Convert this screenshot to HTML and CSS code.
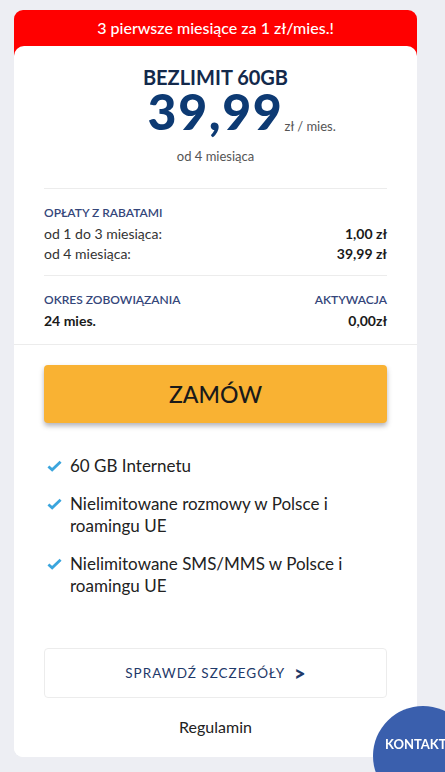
FILE: index.html
```html
<!DOCTYPE html>
<html lang="pl">
<head>
  <meta charset="UTF-8">
  <meta name="viewport" content="width=device-width, initial-scale=1.0">
  <title>Bezlimit 60GB</title>
  <link rel="stylesheet" href="styles.css">
</head>
<body>
  <div class="offer-card">
    <div class="promo">3 pierwsze miesiące za 1 zł/mies.!</div>

    <div class="card-body">
      <div class="inner">
        <h2 class="plan-name">BEZLIMIT 60GB</h2>
        <div class="price">
          <span class="amount">39,99<span class="per">zł / mies.</span></span>
        </div>
        <div class="price-note">od 4 miesiąca</div>

        <div class="fees">
          <div class="label">OPŁATY Z RABATAMI</div>
          <div class="row">
            <span>od 1 do 3 miesiąca:</span>
            <b>1,00 zł</b>
          </div>
          <div class="row">
            <span>od 4 miesiąca:</span>
            <b>39,99 zł</b>
          </div>
        </div>

        <div class="terms">
          <div class="row labels">
            <span class="label">OKRES ZOBOWIĄZANIA</span>
            <span class="label">AKTYWACJA</span>
          </div>
          <div class="row">
            <b>24 mies.</b>
            <b>0,00zł</b>
          </div>
        </div>
      </div>

      <div class="inner bottom">
        <button class="order-btn">ZAMÓW</button>

        <ul class="features">
          <li>
            <svg class="check" viewBox="0 0 16 12"><path d="M1.5 6.5 L5.5 10 L14.5 1.5" /></svg>
            <span>60 GB Internetu</span>
          </li>
          <li>
            <svg class="check" viewBox="0 0 16 12"><path d="M1.5 6.5 L5.5 10 L14.5 1.5" /></svg>
            <span>Nielimitowane rozmowy w Polsce i roamingu UE</span>
          </li>
          <li>
            <svg class="check" viewBox="0 0 16 12"><path d="M1.5 6.5 L5.5 10 L14.5 1.5" /></svg>
            <span>Nielimitowane SMS/MMS w Polsce i roamingu UE</span>
          </li>
        </ul>

        <a class="details-btn" href="#">SPRAWDŹ SZCZEGÓŁY <span class="arrow">&gt;</span></a>

        <a class="rules" href="#">Regulamin</a>
      </div>
    </div>
  </div>

  <a class="contact" href="#">KONTAKT</a>
</body>
</html>
```

FILE: styles.css
```css
body {
  font-family: Lato, 'Open Sans', sans-serif;
  margin: 0;
  padding: 10px 28px 14px 14px;
  background-color: #edeef3;
  overflow: hidden;
}

/* red only behind the header, so the bottom corners stay clean */
.offer-card {
  background: linear-gradient(#ff0000 0, #ff0000 50px, #fff 50px);
  border-radius: 9px;
  overflow: hidden;
}

.promo {
  height: 36px;
  line-height: 36px;
  text-align: center;
  color: #fff;
  font-size: 16px;
  font-weight: 500;
}

.card-body {
  background-color: #fff;
  border-radius: 10px 10px 0 0;
  padding-bottom: 20px;
}

.inner {
  padding: 0 30px;
}

.plan-name {
  margin: 0;
  padding-top: 19px;
  text-align: center;
  font-size: 20px;
  line-height: 24px;
  font-weight: 700;
  color: #13294b;
}

.price {
  display: flex;
  justify-content: center;
}

.amount {
  position: relative;
  font-size: 50px;
  line-height: 44px;
  font-weight: 900;
  color: #0d3a73;
  letter-spacing: 1.6px;
}

.per {
  position: absolute;
  left: calc(100% + 1px);
  top: 29px;
  white-space: nowrap;
  font-size: 13px;
  line-height: 16px;
  font-weight: 400;
  letter-spacing: 0;
  color: #555;
}

.price-note {
  margin-top: 15px;
  text-align: center;
  font-size: 13px;
  line-height: 16px;
  color: #555;
  padding-bottom: 24px;
  border-bottom: 1px solid #ececec;
}

.fees {
  padding: 16px 0 11px;
  border-bottom: 1px solid #ececec;
}

.label {
  font-size: 12px;
  font-weight: 600;
  color: #34467a;
  line-height: 16px;
}

.fees .label {
  margin-bottom: 3px;
}

.row {
  display: flex;
  justify-content: space-between;
  font-size: 14px;
  line-height: 20px;
  color: #333;
}

.row.labels {
  line-height: 16px;
  margin-bottom: 3px;
}

.row b {
  color: #1a1a1a;
}

.terms {
  padding: 16px 0 13px;
}

.bottom {
  border-top: 1px solid #ececec;
  padding-top: 20px;
}

.order-btn {
  display: block;
  width: 100%;
  height: 58px;
  border: none;
  border-radius: 4px;
  background-color: #f9b233;
  box-shadow: 0 3px 5px rgba(40, 40, 60, 0.35);
  font-family: inherit;
  font-size: 23px;
  font-weight: 500;
  color: #1a1a1a;
  cursor: pointer;
}

.features {
  list-style: none;
  margin: 32px 0 0;
  padding: 0 0 0 3px;
}

.features li {
  display: flex;
  align-items: flex-start;
  font-size: 17px;
  line-height: 22px;
  color: #222;
  margin-bottom: 16px;
}

.features li:last-child {
  margin-bottom: 0;
}

.check {
  flex: none;
  width: 15px;
  height: 12px;
  margin: 5px 8px 0 0;
  fill: none;
  stroke: #3ba5dd;
  stroke-width: 3;
}

.details-btn {
  display: flex;
  justify-content: center;
  align-items: center;
  box-sizing: border-box;
  height: 50px;
  margin-top: 51px;
  border: 1px solid #ececec;
  border-radius: 4px;
  font-size: 13.5px;
  letter-spacing: 1px;
  color: #1f3a6a;
  text-decoration: none;
}

.arrow {
  margin-left: 9px;
  font-size: 20px;
  font-weight: 900;
  letter-spacing: 0;
}

.rules {
  display: block;
  margin-top: 19px;
  text-align: center;
  font-size: 16px;
  line-height: 20px;
  color: #222;
  text-decoration: none;
}

.contact {
  position: fixed;
  left: 373px;
  top: 706px;
  width: 100px;
  height: 100px;
  border-radius: 50%;
  background-color: #3a5fad;
  color: #fff;
  font-size: 13px;
  font-weight: 700;
  text-decoration: none;
  box-sizing: border-box;
  padding: 30px 0 0 12px;
}
```
